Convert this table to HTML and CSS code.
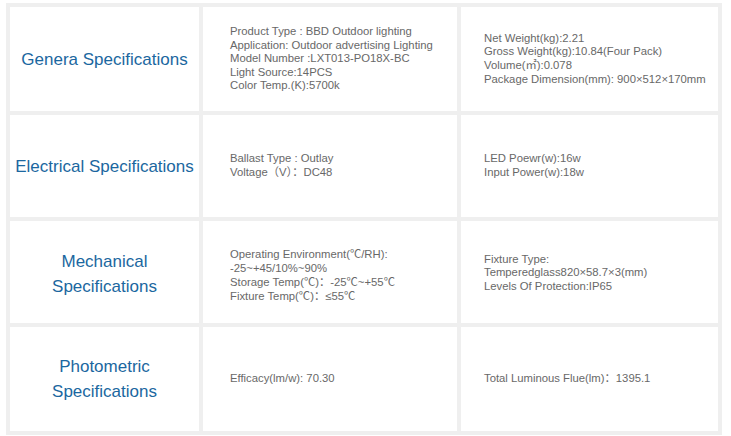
FILE: index.html
```html
<!DOCTYPE html>
<html>
<head>
<meta charset="utf-8">
<link rel="stylesheet" href="styles.css">
</head>
<body>
<table class="spec">
  <colgroup>
    <col class="c1"><col class="c2"><col class="c3">
  </colgroup>
  <tr class="r-tall">
    <th>Genera Specifications</th>
    <td class="mid">Product Type : BBD Outdoor lighting<br>Application: Outdoor advertising Lighting<br>Model Number :LXT013-PO18X-BC<br>Light Source:14PCS<br>Color Temp.(K):5700k</td>
    <td class="right">Net Weight(kg):2.21<br>Gross Weight(kg):10.84(Four Pack)<br>Volume(㎡):0.078<br>Package Dimension(mm): 900×512×170mm</td>
  </tr>
  <tr class="r-short">
    <th>Electrical Specifications</th>
    <td class="mid">Ballast Type : Outlay<br>Voltage（V）：DC48</td>
    <td class="right">LED Poewr(w):16w<br>Input Power(w):18w</td>
  </tr>
  <tr class="r-short r-mech">
    <th>Mechanical Specifications</th>
    <td class="mid">Operating Environment(℃/RH):<br>-25~+45/10%~90%<br>Storage Temp(℃)：-25℃~+55℃<br>Fixture Temp(℃)：≤55℃</td>
    <td class="right">Fixture Type:<br>Temperedglass820×58.7×3(mm)<br>Levels Of Protection:IP65</td>
  </tr>
  <tr class="r-tall">
    <th>Photometric Specifications</th>
    <td class="mid">Efficacy(lm/w): 70.30</td>
    <td class="right">Total Luminous Flue(lm)：1395.1</td>
  </tr>
</table>
</body>
</html>
```

FILE: styles.css
```css
html, body {
  margin: 0;
  padding: 0;
  background: #ffffff;
}

.spec {
  margin: 3px 0 0 6px;
  width: 716px;
  table-layout: fixed;
  border-collapse: separate;
  border-spacing: 4px;
  background: #efefef;
  font-family: "Liberation Sans", Arial, "Noto Sans CJK SC", sans-serif;
}

.c1 { width: 189px; }
.c2 { width: 254px; }
.c3 { width: 257px; }

.r-tall { height: 104px; }
.r-short { height: 102px; }

.spec th,
.spec td {
  background: #ffffff;
  vertical-align: middle;
}

.spec th {
  padding: 0 3px;
  font-weight: normal;
  font-size: 17px;
  line-height: 25px;
  color: #1b67a0;
  text-align: center;
}

.spec td {
  font-size: 11.3px;
  line-height: 13.6px;
  color: #686868;
  text-align: left;
  white-space: nowrap;
}

.spec td.mid {
  padding: 0 0 0 27px;
}

.spec td.right {
  padding: 0 0 0 23px;
}

.r-mech th {
  padding-top: 4px;
}

.r-mech td.mid {
  padding-top: 5px;
  line-height: 14px;
}

.r-mech td.right {
  padding-top: 2px;
}
```
